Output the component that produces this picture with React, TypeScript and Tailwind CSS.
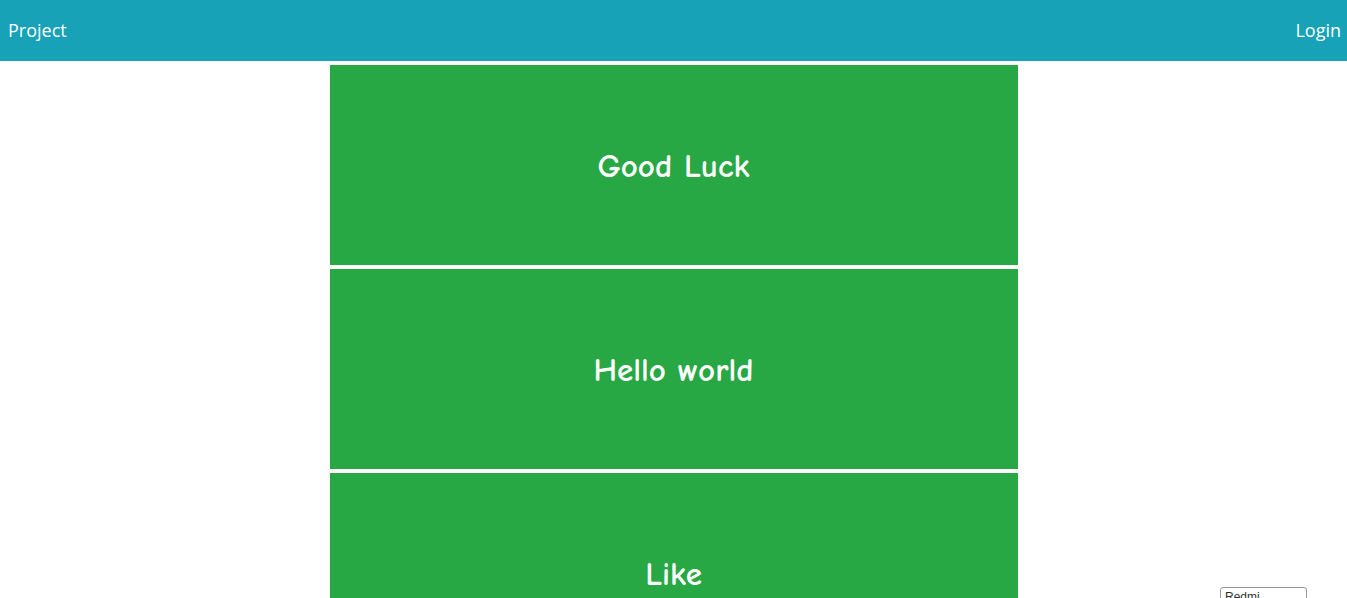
export default function App() {
  const items = ["Good Luck", "Hello world", "Like"];

  return (
    <div className="relative h-[598px] overflow-hidden bg-white">
      <header className="flex h-[61px] items-center justify-between bg-[#17a2b8] pl-2 pr-1.5 text-[18px] text-white font-['Open_Sans',sans-serif]">
        <span>Project</span>
        <span>Login</span>
      </header>
      <main className="mx-auto mt-1 flex w-[688px] flex-col gap-1">
        {items.map((item) => (
          <div
            key={item}
            className="flex h-[200px] items-center justify-center bg-[#28a745] pt-1 text-[33px] font-bold text-white font-['Comic_Sans_MS','Comic_Neue',cursive,sans-serif]"
          >
            {item}
          </div>
        ))}
      </main>
      <div className="absolute left-[1220px] top-[587px] h-[24px] w-[87px] rounded-[3px] border border-[#9a9a9a] bg-white pl-1 pt-[2px] text-[12px] leading-[14px] text-[#333] font-['Liberation_Sans',sans-serif]">
        Redmi
      </div>
    </div>
  );
}
